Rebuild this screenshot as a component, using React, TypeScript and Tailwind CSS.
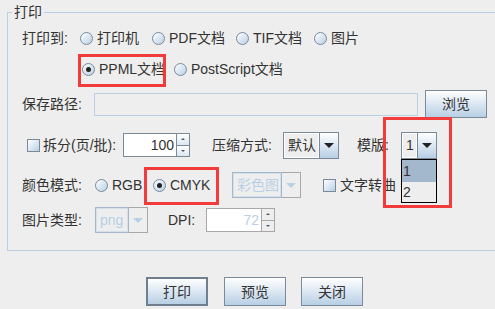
import React from "react";

const Radio = ({ checked = false }: { checked?: boolean }) => (
  <span className="flex h-[13px] w-[13px] shrink-0 items-center justify-center rounded-full border border-[#7a8a99] bg-linear-to-br from-white to-[#b8cfe5]">
    {checked && <span className="h-[5px] w-[5px] rounded-full bg-[#222]" />}
  </span>
);

const Check = () => (
  <span className="h-[13px] w-[13px] shrink-0 border border-[#7a8a99] bg-linear-to-br from-white to-[#b8cfe5]" />
);

const RadioItem = ({ label, checked, w }: { label: string; checked?: boolean; w: string }) => (
  <div className={`flex items-center gap-[4px] ${w}`}>
    <Radio checked={checked} />
    <span>{label}</span>
  </div>
);

const Combo = ({
  text,
  w,
  h,
  disabled = false,
}: {
  text: string;
  w: string;
  h: string;
  disabled?: boolean;
}) => (
  <div className={`flex ${w} ${h} shrink-0`}>
    <div
      className={`flex flex-1 items-center border pl-[4px] ${
        disabled
          ? "border-[#a3b8cc] text-[#b8cfe5] shadow-[inset_1px_1px_0_#d4e0ec,inset_-1px_-1px_0_#d4e0ec]"
          : "border-[#7a8a99] text-[#333] shadow-[inset_1px_1px_0_#fff,inset_-1px_-1px_0_#fff]"
      }`}
    >
      {text}
    </div>
    <div
      className={`flex w-[19px] items-center justify-center border border-l-0 ${
        disabled ? "border-[#a8a8a8] bg-[#eeeeee]" : "border-[#7a8a99] bg-linear-to-b from-white to-[#b8cfe5]"
      }`}
    >
      <span
        className={`h-0 w-0 border-x-[5px] border-t-[5px] border-x-transparent ${
          disabled ? "border-t-[#b8cfe5]" : "border-t-[#222]"
        }`}
      />
    </div>
  </div>
);

const Spinner = ({ value, w, disabled = false }: { value: string; w: string; disabled?: boolean }) => (
  <div className={`flex ${w} h-[24px] shrink-0`}>
    <div
      className={`flex flex-1 items-center justify-end border border-r-0 bg-white pr-[2px] ${
        disabled ? "border-[#a8a8a8] text-[#b8cfe5]" : "border-[#7a8a99] text-[#333]"
      }`}
    >
      {value}
    </div>
    <div className={`flex w-[14px] flex-col border ${disabled ? "border-[#a8a8a8]" : "border-[#7a8a99]"}`}>
      <div
        className={`flex flex-1 items-center justify-center border-b ${
          disabled ? "border-[#a8a8a8] bg-[#eeeeee]" : "border-[#7a8a99] bg-linear-to-b from-white to-[#dce6f0]"
        }`}
      >
        <span className="h-0 w-0 border-x-[2px] border-b-[2px] border-x-transparent border-b-[#556]" />
      </div>
      <div
        className={`flex flex-1 items-center justify-center ${
          disabled ? "bg-[#eeeeee]" : "bg-linear-to-b from-white to-[#dce6f0]"
        }`}
      >
        <span className="h-0 w-0 border-x-[2px] border-t-[2px] border-x-transparent border-t-[#556]" />
      </div>
    </div>
  </div>
);

const Btn = ({ label, focused = false }: { label: string; focused?: boolean }) => (
  <button
    className={`flex h-[29px] w-[62px] items-center justify-center bg-linear-to-b from-white to-[#b8cfe5] text-[#333] ${
      focused ? "border-2 border-[#6f7f8f]" : "border border-[#7a8a99]"
    }`}
  >
    {label}
  </button>
);

export default function App() {
  return (
    <div className="relative h-[309px] w-[495px] overflow-hidden bg-[#eeeeee] font-['Liberation_Sans','Noto_Sans_CJK_SC',sans-serif] text-[14px] leading-none text-[#333]">
      <div className="relative ml-[7px] mt-[12px] h-[239px] w-[500px] border border-[#b8cfe5] pl-[14px] pt-[13px]">
        <span className="absolute left-[4px] top-[-8px] bg-[#eeeeee] px-[2px]">打印</span>

        <div className="flex h-[24px] items-center">
          <span className="w-[58px]">打印到:</span>
          <RadioItem label="打印机" w="w-[72px]" />
          <RadioItem label="PDF文档" w="w-[84px]" />
          <RadioItem label="TIF文档" w="w-[78px]" />
          <RadioItem label="图片" w="w-[60px]" />
        </div>

        <div className="mt-[7px] flex h-[24px] items-center pl-[60px]">
          <RadioItem label="PPML文档" checked w="w-[92px]" />
          <RadioItem label="PostScript文档" w="w-[120px]" />
        </div>

        <div className="mt-[9px] flex h-[28px] items-center">
          <span className="w-[72px]">保存路径:</span>
          <div className="h-[23px] w-[324px] border border-[#b8cfe5] bg-[#eeeeee]" />
          <div className="ml-[7px] h-[28px]">
            <button className="flex h-[28px] w-[62px] items-center justify-center border border-[#7a8a99] bg-linear-to-b from-white to-[#b8cfe5]">
              浏览
            </button>
          </div>
        </div>

        <div className="mt-[13px] flex h-[28px] items-center">
          <div className="flex w-[101px] items-center gap-[3px] pl-[5px]">
            <Check />
            <span>拆分(页/批):</span>
          </div>
          <Spinner value="100" w="w-[67px]" />
          <span className="ml-[22px] w-[71px]">压缩方式:</span>
          <Combo text="默认" w="w-[56px]" h="h-[27px]" />
          <span className="ml-[18px] w-[44px]">模版:</span>
          <Combo text="1" w="w-[36px]" h="h-[27px]" />
        </div>

        <div className="mt-[13px] flex h-[26px] items-center">
          <span className="w-[73px]">颜色模式:</span>
          <RadioItem label="RGB" w="w-[58px]" />
          <RadioItem label="CMYK" checked w="w-[79px]" />
          <Combo text="彩色图" w="w-[69px]" h="h-[26px]" disabled />
          <div className="ml-[22px] flex items-center gap-[4px]">
            <Check />
            <span>文字转曲</span>
          </div>
        </div>

        <div className="mt-[9px] flex h-[26px] items-center">
          <span className="w-[73px]">图片类型:</span>
          <Combo text="png" w="w-[53px]" h="h-[26px]" disabled />
          <span className="ml-[20px] w-[38px]">DPI:</span>
          <Spinner value="72" w="w-[69px]" disabled />
        </div>
      </div>

      <div className="mt-[26px] flex items-center pl-[146px]">
        <Btn label="打印" focused />
        <div className="ml-[16px]">
          <Btn label="预览" />
        </div>
        <div className="ml-[15px]">
          <Btn label="关闭" />
        </div>
      </div>

      {/* open combo list */}
      <div className="absolute left-[401px] top-[159px] flex h-[44px] w-[36px] flex-col border border-black bg-[#eeeeee]">
        <div className="flex h-[22px] items-center bg-[#a3b8cc] pl-[1px]">1</div>
        <div className="flex h-[20px] items-center pl-[1px]">2</div>
      </div>

      {/* annotation boxes */}
      <div className="absolute left-[78px] top-[54px] h-[33px] w-[88px] border-[3px] border-[#f23c3c]" />
      <div className="absolute left-[383px] top-[117px] h-[91px] w-[69px] border-[3px] border-[#f23c3c]" />
      <div className="absolute left-[144px] top-[167px] h-[38px] w-[75px] border-[3px] border-[#f23c3c]" />
    </div>
  );
}
